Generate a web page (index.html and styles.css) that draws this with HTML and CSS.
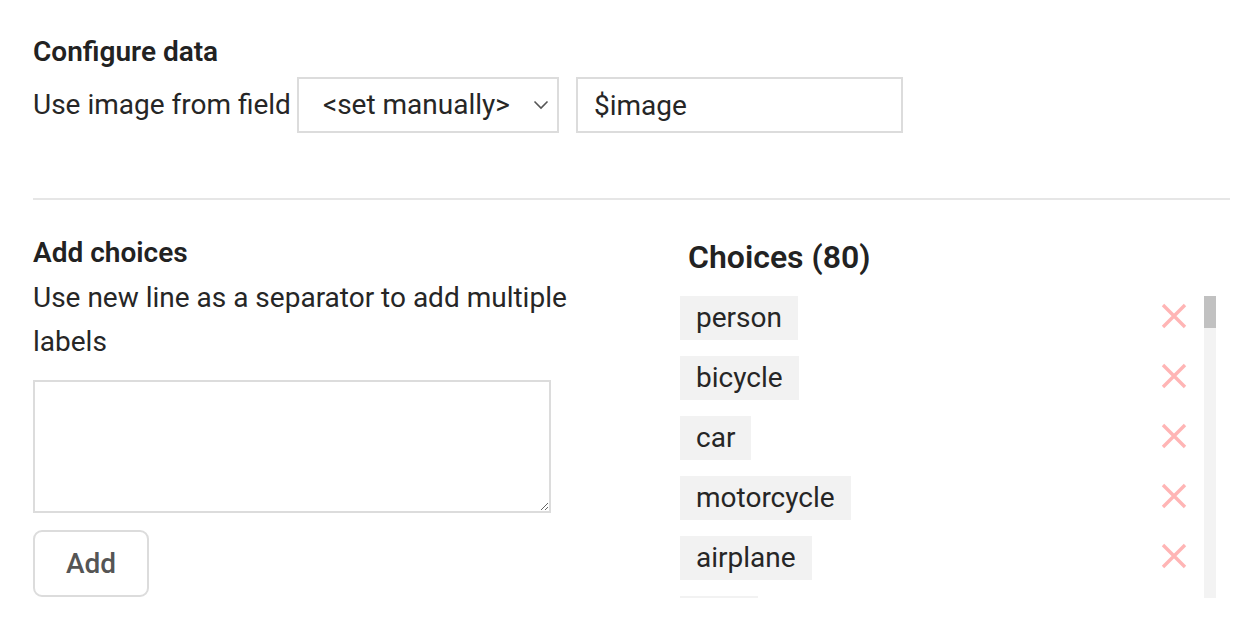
FILE: index.html
```html
<!DOCTYPE html>
<html lang="en">
<head>
<meta charset="utf-8">
<title>Configure data</title>
<link rel="stylesheet" href="styles.css">
</head>
<body>
<div class="page">
  <section class="config">
    <h3 class="title">Configure data</h3>
    <div class="field-row">
      <span class="field-label">Use image from field</span>
      <div class="select">
        <span class="select-value">&lt;set manually&gt;</span>
        <svg class="chevron" width="16" height="10" viewBox="0 0 16 10"><polyline points="1.5,1.5 8,8 14.5,1.5" fill="none" stroke="#555" stroke-width="1.6"/></svg>
      </div>
      <input class="text-input" type="text" value="$image">
    </div>
  </section>
  <hr class="divider">
  <section class="choices-area">
    <div class="add-col">
      <h3 class="title">Add choices</h3>
      <p class="hint">Use new line as a separator to add multiple labels</p>
      <textarea class="textarea"></textarea>
      <button class="btn" type="button">Add</button>
    </div>
    <div class="list-col">
      <h2 class="list-title">Choices (80)</h2>
      <div class="list-wrap">
        <ul class="list">
          <li class="item"><span class="tag">person</span><svg class="remove" width="26" height="26" viewBox="0 0 26 26"><path d="M2 2L24 24M24 2L2 24" stroke="#ffb5b5" stroke-width="3.4"/></svg></li>
          <li class="item"><span class="tag">bicycle</span><svg class="remove" width="26" height="26" viewBox="0 0 26 26"><path d="M2 2L24 24M24 2L2 24" stroke="#ffb5b5" stroke-width="3.4"/></svg></li>
          <li class="item"><span class="tag">car</span><svg class="remove" width="26" height="26" viewBox="0 0 26 26"><path d="M2 2L24 24M24 2L2 24" stroke="#ffb5b5" stroke-width="3.4"/></svg></li>
          <li class="item"><span class="tag">motorcycle</span><svg class="remove" width="26" height="26" viewBox="0 0 26 26"><path d="M2 2L24 24M24 2L2 24" stroke="#ffb5b5" stroke-width="3.4"/></svg></li>
          <li class="item"><span class="tag">airplane</span><svg class="remove" width="26" height="26" viewBox="0 0 26 26"><path d="M2 2L24 24M24 2L2 24" stroke="#ffb5b5" stroke-width="3.4"/></svg></li>
          <li class="item item-partial"><span class="tag tag-partial"></span></li>
        </ul>
        <div class="scrollbar"><div class="thumb"></div></div>
      </div>
    </div>
  </section>
</div>
</body>
</html>
```

FILE: styles.css
```css
* { box-sizing: border-box; }

html, body {
  margin: 0;
  padding: 0;
  background: #fff;
  overflow: hidden;
}

body {
  font-family: Roboto, "Liberation Sans", Arial, sans-serif;
  font-size: 28px;
  line-height: 44px;
  color: #262626;
}

.page {
  width: 1256px;
  height: 628px;
  padding: 30px 26px 0 33px;
}

.title {
  margin: 0;
  font-size: 28px;
  line-height: 44px;
  font-weight: 600;
  color: #222;
}

.field-row {
  display: flex;
  align-items: center;
  margin-top: 3px;
}

.field-label {
  margin-right: 6px;
}

.select {
  width: 262px;
  height: 56px;
  border: 2px solid #dcdcdc;
  display: flex;
  align-items: center;
  justify-content: space-between;
  padding: 0 8px 0 24px;
  margin-right: 17px;
}

.select-value {
  white-space: nowrap;
}

.chevron {
  display: block;
}

.text-input {
  width: 327px;
  height: 56px;
  border: 2px solid #dcdcdc;
  padding: 0 16px;
  font: inherit;
  color: #262626;
  outline: none;
  background: #fff;
}

.divider {
  margin: 65px 0 0;
  border: 0;
  height: 2px;
  background: #e6e6e6;
}

.choices-area {
  display: flex;
  margin-top: 31px;
}

.add-col {
  width: 560px;
  flex: 0 0 560px;
  display: flex;
  flex-direction: column;
  align-items: flex-start;
}

.hint {
  margin: 1px 0 0;
}

.textarea {
  width: 518px;
  height: 133px;
  margin-top: 16px;
  border: 2px solid #dcdcdc;
  resize: both;
  font: inherit;
  padding: 8px 12px;
  outline: none;
}

.btn {
  margin-top: 17px;
  width: 116px;
  height: 67px;
  border: 2px solid #dcdcdc;
  border-radius: 9px;
  background: #fff;
  font-family: Roboto, "Liberation Sans", Arial, sans-serif;
  font-size: 28px;
  font-weight: 500;
  color: #555;
  padding: 0;
}

.list-col {
  margin-left: 87px;
  width: 536px;
}

.list-title {
  margin: 4px 0 17px 8px;
  font-size: 32px;
  line-height: 44px;
  font-weight: 600;
  color: #222;
}

.list-wrap {
  display: flex;
  height: 302px;
}

.list {
  list-style: none;
  margin: 0;
  padding: 0 17px 0 0;
  flex: 1;
  overflow: hidden;
}

.item {
  display: flex;
  align-items: center;
  justify-content: space-between;
  height: 44px;
  margin-bottom: 16px;
}

.tag {
  background: #f2f2f2;
  padding: 0 16px;
  line-height: 44px;
  height: 44px;
}

.tag-partial {
  width: 78px;
}

.item-partial {
  align-items: flex-start;
}

.remove {
  display: block;
  margin-top: -4px;
}

.scrollbar {
  width: 12px;
  flex: 0 0 12px;
  background: #f3f3f3;
}

.thumb {
  height: 32px;
  background: #c1c1c1;
}
```
